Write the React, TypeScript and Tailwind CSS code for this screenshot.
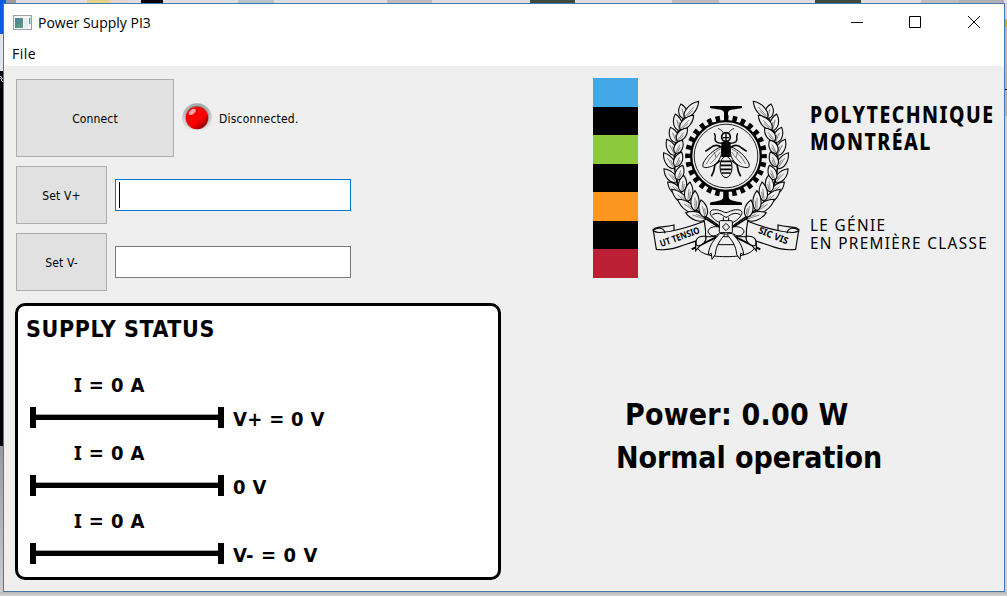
import React from "react";

const uiFont = "font-['DejaVu_Sans_Condensed','DejaVu_Sans',sans-serif]";

/* Outer and inner leaves of one laurel branch: base x/y, tip x/y. */
const leaves: number[][] = [
  [118, 86, 108, 42], [104, 122, 91, 72], [95, 158, 76, 112], [90, 196, 65, 148],
  [88, 236, 56, 188], [94, 278, 57, 236], [108, 314, 68, 276], [130, 344, 80, 298],
  [154, 368, 98, 328], [182, 388, 122, 368],
  [118, 82, 161, 34], [105, 118, 146, 76], [96, 152, 127, 114], [91, 190, 112, 150],
  [91, 230, 110, 186], [96, 270, 113, 226], [110, 306, 116, 256], [128, 334, 135, 276],
  [150, 362, 150, 302], [180, 382, 168, 330],
];

function Leaf({ c }: { c: number[] }) {
  const [x, y, tx, ty] = c;
  const len = Math.hypot(tx - x, ty - y);
  const angle = (Math.atan2(ty - y, tx - x) * 180) / Math.PI;
  return (
    <g transform={`translate(${x} ${y}) rotate(${angle})`}>
      <path
        d={`M0 0C${len * 0.15} -16 ${len * 0.65} -17 ${len} 0C${len * 0.65} 17 ${len * 0.15} 16 0 0Z`}
        fill="#efefef"
        strokeWidth="3.2"
      />
      <path d={`M0 0L${len * 0.65} 0M${len * 0.15} 4L${len * 0.5} 5`} strokeWidth="1.3" />
    </g>
  );
}

function Branch() {
  return (
    <g>
      <path d="M122 72C82 140 76 240 108 308C135 360 180 372 235 418" strokeWidth="4.5" />
      {leaves.map((c, i) => (
        <Leaf key={i} c={c} />
      ))}
      <path d="M176 382L235 420" strokeWidth="4.5" />
    </g>
  );
}

function Banner() {
  return (
    <g fill="#efefef" strokeWidth="3.4">
      <path d="M25 424C22 408 52 414 87 405V428L60 434Z" />
      <path d="M152 440V482L182 447" />
      <path d="M25 422C36 436 110 420 178 394Q183 420 182 446C130 454 90 486 34 478Z" />
      <path d="M25 422C36 410 58 412 60 430" fill="none" />
      <path d="M182 438C160 438 150 446 154 464C158 474 188 460 182 438Z" />
    </g>
  );
}

function HalfBee() {
  return (
    <g>
      <path d="M235 129C231 121 226 119 219 115" strokeWidth="2.5" />
      <path d="M231 160C215 160 207 154 211 139L208 130" strokeWidth="4" />
      <path d="M230 172C214 161 203 167 196 174L181 184" strokeWidth="5" />
      <path d="M226 212L210 224L206 244L199 259" strokeWidth="5" />
      <path d="M230 170C206 178 184 200 175 219C168 237 183 234 200 229C219 221 231 198 230 184Z" fill="#efefef" strokeWidth="3" />
      <path d="M227 176C207 186 194 204 184 222M226 186C215 202 204 214 196 221M208 186L213 203" strokeWidth="1.5" />
    </g>
  );
}

function Bow() {
  return (
    <g fill="#efefef" strokeWidth="3">
      <path d="M153 462C158 490 190 500 243 500C296 500 328 490 333 462L320 440H166Z" />
      <path d="M140 478L225 436M346 478L261 436" strokeWidth="6" />
      <path d="M210 464H278" />
      <path d="M224 398C205 390 185 366 202 360C220 356 232 366 243 368C254 366 266 356 284 360C302 366 281 390 262 398Z" />
      <path d="M202 374C225 362 235 381 243 382C252 381 262 362 286 374" fill="none" />
      <path d="M235 382V396M251 382V396" />
      <path d="M224 412C208 406 188 414 189 426C196 442 214 440 224 428M262 412C278 406 298 414 297 426C290 442 272 440 262 428" />
      <path d="M225 430C210 446 192 464 190 494L199 490L201 508L211 493C213 466 226 450 241 432ZM261 430C276 446 293 464 296 494L287 490L285 508L275 493C273 466 260 450 245 432Z" />
      <rect x="223" y="392" width="39" height="36" rx="3" />
      <path d="M243 400L254 411L243 422L232 411Z" />
    </g>
  );
}

function Emblem() {
  const mirror = "translate(486 0) scale(-1 1)";
  return (
    <svg width="165" height="180" viewBox="0 0 495 540" fill="none" stroke="#000">
      <Branch />
      <g transform={mirror}>
        <Branch />
      </g>
      <circle cx="243" cy="198" r="113" strokeWidth="19" strokeDasharray="13.4 11.958" strokeDashoffset="6.7" />
      <circle cx="243" cy="198" r="104.5" strokeWidth="7" fill="#efefef" />
      <circle cx="243" cy="198" r="95.5" strokeWidth="2.6" />
      <path d="M195 48H291V54C275 59 249 56 249 68V94H237V68C237 56 211 59 195 54Z" fill="#000" stroke="none" />
      <path d="M235 304V320C235 334 211 332 195 338V345H291V338C275 332 251 334 251 320V304Z" fill="#000" stroke="none" />
      <HalfBee />
      <g transform={mirror}>
        <HalfBee />
      </g>
      <ellipse cx="243" cy="231" rx="18" ry="32" fill="#efefef" strokeWidth="3" />
      <path d="M227 214H259M226 226H260M227 238H259M230 249H256" strokeWidth="5" />
      <path d="M229 157Q243 150 257 157V201H229Z" fill="#000" stroke="none" />
      <circle cx="243" cy="141" r="13" fill="#efefef" strokeWidth="5" />
      <path d="M243 129V153M234 143H252" strokeWidth="4" />
      <Bow />
      <Banner />
      <g transform={mirror}>
        <Banner />
      </g>
      <g fill="#000" stroke="none" fontFamily="Noto Sans, sans-serif" fontWeight="700" fontSize="28">
        <text transform="translate(49 471) rotate(-20)" textLength="125" lengthAdjust="spacingAndGlyphs">UT TENSIO</text>
        <text transform="translate(338 428) rotate(22)" textLength="94" lengthAdjust="spacingAndGlyphs">SIC VIS</text>
      </g>
    </svg>
  );
}

function Led() {
  return (
    <svg width="30" height="30" viewBox="0 0 30 30">
      <defs>
        <linearGradient id="rim" x1="0" y1="0" x2="0" y2="1">
          <stop offset="0" stopColor="#a6a6a6" />
          <stop offset="1" stopColor="#f2f2f2" />
        </linearGradient>
        <linearGradient id="bezel" x1="0" y1="0" x2="0" y2="1">
          <stop offset="0" stopColor="#777" />
          <stop offset="1" stopColor="#ddd" />
        </linearGradient>
        <linearGradient id="lamp" x1="0.15" y1="0.1" x2="0.85" y2="0.9">
          <stop offset="0.6" stopColor="#ff0000" />
          <stop offset="1" stopColor="#900000" />
        </linearGradient>
      </defs>
      <circle cx="15" cy="15" r="14.8" fill="url(#rim)" />
      <circle cx="15" cy="15" r="12.3" fill="url(#bezel)" />
      <circle cx="15" cy="15" r="11.2" fill="url(#lamp)" />
      <ellipse cx="10.2" cy="9" rx="4" ry="2.3" fill="#fff" opacity=".65" transform="rotate(-38 10.2 9)" />
    </svg>
  );
}

function Channel({ label, spacing }: { label: string; spacing: string }) {
  return (
    <div className="h-[68px]">
      <div className="ml-[56px] h-6 pt-px text-[20px] leading-6 tracking-[0.4px] whitespace-nowrap">
        <span className="font-['Noto_Sans',sans-serif]">I</span> = 0 A
      </div>
      <div className="ml-[12px] mt-[10px] flex h-[22px] items-center">
        <div className="flex h-[21px] w-[194px] items-center">
          <div className="h-full w-1.5 bg-black" />
          <div className="h-[6px] flex-1 border-t border-[#a5a5a5] bg-black" />
          <div className="h-full w-1.5 bg-black" />
        </div>
        <div className={`ml-[9px] mt-[3px] text-[20px] leading-6 whitespace-nowrap ${spacing}`}>{label}</div>
      </div>
    </div>
  );
}

function PushButton({ children, size }: { children: React.ReactNode; size: string }) {
  return (
    <button className={`flex items-center justify-center border border-[#adadad] bg-[#e1e1e1] pt-[2px] text-[12px] tracking-[0.15px] ${size}`}>
      {children}
    </button>
  );
}

export default function App() {
  return (
    <div className={`flex h-[596px] w-[1007px] flex-col overflow-hidden bg-[#c9c9c9] text-black ${uiFont}`}>
      <div className="flex h-[3px] shrink-0 bg-[#dedede]">
        <div className="w-[6px] bg-[#0a5be0]" />
        <div className="w-[10px] bg-[#9c9c9c]" />
        <div className="ml-[71px] w-[23px] bg-[#e5d28a]" />
        <div className="w-[18px] bg-[#e3d3d3]" />
        <div className="ml-[13px] w-[22px] bg-black" />
        <div className="ml-[75px] w-[36px] bg-[#b7c4cc]" />
        <div className="ml-[113px] w-[45px] bg-[#bcbcbc]" />
        <div className="ml-[98px] w-[45px] bg-[#3d4a3c]" />
        <div className="ml-[97px] w-[47px] bg-[#bcbcbc]" />
        <div className="ml-[96px] w-[46px] bg-[#3d4a3c]" />
        <div className="ml-[60px] w-[38px] bg-[#bdbdbd]" />
        <div className="w-[45px] bg-[#b0b0b0]" />
      </div>
      <div className="flex h-[589px] shrink-0">
        <div className="flex w-[3px] shrink-0 flex-col bg-[#c9c9c9]">
          <div className="h-[31px] bg-[#0a5be0]" />
          <div className="h-[37px] bg-[#e4e4e4]" />
          <div className="h-[375px] bg-black">
            <svg width="3" height="14" viewBox="0 0 3 14" fill="none" stroke="#aaa">
              <path d="M0 5.5h1.5v2H0M3 7L1 9l2 2" />
            </svg>
          </div>
          <div className="flex-1 bg-gradient-to-b from-[#999] to-[#ccc]" />
        </div>

        <div className="flex w-[1002px] shrink-0 flex-col border border-[#4779b0] bg-[#efefef]">
          <div className="flex h-9 items-center bg-white pl-[9px] font-['Open_Sans',sans-serif]">
            <svg width="19" height="15" viewBox="0 0 19 15" className="mt-px">
              <defs>
                <linearGradient id="app" x1="0" y1="0" x2="1" y2="1">
                  <stop stopColor="#4b7f9d" />
                  <stop offset="1" stopColor="#5ca37a" />
                </linearGradient>
              </defs>
              <rect x=".5" y=".5" width="18" height="14" fill="#f6f8f8" stroke="#9aa0a4" />
              <rect x="2" y="3" width="8" height="10" fill="url(#app)" />
              <rect x="11" y="3" width="4" height="10" fill="#e9edf2" />
              <rect x="16" y="3" width="1.4" height="6" fill="#5b9c8d" />
            </svg>
            <span className="ml-[6px] mt-[2px] text-[14px] leading-5">Power Supply PI3</span>
            <div className="flex-1" />
            <svg width="12" height="13" viewBox="0 0 12 13" stroke="#000" className="mr-[46px]">
              <path d="M0 6.5H12" />
            </svg>
            <svg width="12" height="12" viewBox="0 0 12 12" fill="none" stroke="#000" className="mr-[47px]">
              <path d="M.5.5H11.5V11.5H.5Z" />
            </svg>
            <svg width="12" height="12" viewBox="0 0 12 12" stroke="#000" className="mr-[24px]">
              <path d="M0 0L12 12M12 0L0 12" />
            </svg>
          </div>
          <div className="flex h-[26px] items-center bg-white pl-[8px] pt-[2px] font-['Open_Sans',sans-serif] text-[14px] leading-5 tracking-[0.5px]">
            File
          </div>

          <div className="flex flex-1">
            <div className="w-[497px] shrink-0 pl-[11px] pt-[13px]">
              <div className="ml-px flex items-center">
                <PushButton size="h-[78px] w-[158px]">Connect</PushButton>
                <div className="-mt-[1px] ml-[8px]">
                  <Led />
                </div>
                <span className="ml-[7px] mt-[2px] text-[12px] tracking-[0.2px]">Disconnected.</span>
              </div>
              <div className="ml-px mt-[9px] flex items-center gap-[8px]">
                <PushButton size="h-[58px] w-[91px]">Set V+</PushButton>
                <div className="flex h-8 w-[236px] items-center border border-[#0078d7] bg-white pl-[3px]">
                  <div className="h-[26px] w-px bg-black" />
                </div>
              </div>
              <div className="ml-px mt-[9px] flex items-center gap-[8px]">
                <PushButton size="h-[58px] w-[91px]">Set V-</PushButton>
                <div className="h-8 w-[236px] border border-[#7a7a7a] bg-white" />
              </div>
              <div className="mt-[12px] h-[277px] w-[486px] rounded-[10px] border-[3px] border-black bg-white font-bold">
                <div className="ml-[8px] mt-[8px] h-[30px] text-[23px] leading-[30px] tracking-[0.6px] whitespace-nowrap">SUPPLY STATUS</div>
                <div className="mt-[28px]">
                  <Channel label="V+ = 0 V" spacing="tracking-[0.3px]" />
                  <Channel label="0 V" spacing="tracking-[0.3px]" />
                  <Channel label="V- = 0 V" spacing="tracking-[0.6px]" />
                </div>
              </div>
            </div>

            <div className="flex-1 pl-[92px] pt-[12px]">
              <div className="flex h-[200px]">
                <div className="flex w-[45px] shrink-0 flex-col">
                  <div className="flex-1 bg-[#42a8e6]" />
                  <div className="flex-1 bg-black" />
                  <div className="flex-1 bg-[#8dc93d]" />
                  <div className="flex-1 bg-black" />
                  <div className="flex-1 bg-[#fb961f]" />
                  <div className="flex-1 bg-black" />
                  <div className="flex-1 bg-[#ba1f33]" />
                </div>
                <div className="ml-[7px] mt-[12px] w-[165px] shrink-0">
                  <Emblem />
                </div>
                <div className="w-[190px] shrink-0 font-['Noto_Sans',sans-serif] whitespace-nowrap">
                  <div className="mt-[24px] origin-left scale-x-[0.865] text-[22.5px] font-extrabold leading-[26.5px] tracking-[1.7px]">
                    <div>POLYTECHNIQUE</div>
                    <div>MONTRÉAL</div>
                  </div>
                  <div className="mt-[61px] origin-left scale-x-[0.9] text-[17px] leading-[18px] tracking-[1.5px]">
                    <div>LE GÉNIE</div>
                    <div>EN PREMIÈRE CLASSE</div>
                  </div>
                </div>
              </div>
              <div className="mt-[115px] text-[30px] font-bold leading-[43px] whitespace-nowrap">
                <div className="ml-[32px] tracking-[0.2px]">Power: 0.00 W</div>
                <div className="ml-[23px] tracking-[-0.05px]">Normal operation</div>
              </div>
            </div>
          </div>
        </div>
        <div className="flex w-[3px] flex-col bg-[#b4b4b8]">
          <div className="h-[16px] bg-[#d5d5d5]" />
          <div className="h-[8px] bg-[#d6a820]" />
          <div className="mt-[62px] h-px bg-black" />
          <div className="mt-[26px] flex-1 bg-[#cfcfd1]" />
        </div>
      </div>
      <div className="flex-1 bg-gradient-to-b from-[#b5b5b5] to-[#d6d6d6]" />
    </div>
  );
}
